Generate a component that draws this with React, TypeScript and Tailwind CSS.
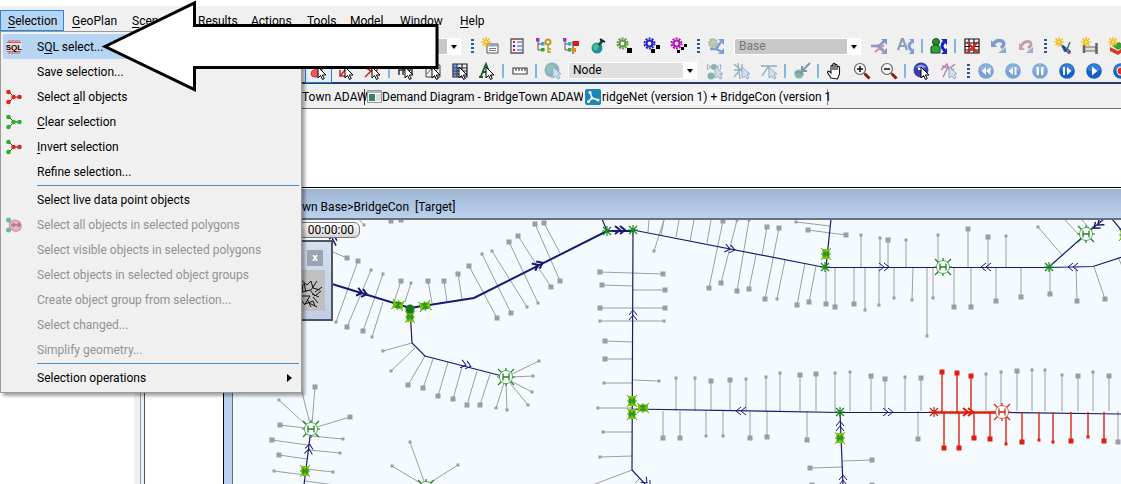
import React from "react";

type Stub = [number, number, number, number, number, number];

const up = (y: number, list: [number, number, number][]): Stub[] =>
  list.map(([x, top, s]) => [x, top, s, x, y, 0]);

const greyStubs: Stub[] = [
  [347, 258, 2, 333, 252, 0], [358, 261, 2, 336, 322, 1], [371, 270, 1, 347, 327, 2], [383, 274, 1, 363, 331, 2],
  [401, 281, 2, 394, 302, 0], [372, 337, 1, 383, 302, 0], [411, 283, 1, 405, 302, 0], [428, 281, 2, 432, 303, 0],
  [444, 281, 2, 447, 302, 0], [458, 274, 2, 462, 299, 0], [469, 266, 2, 497, 318, 2], [482, 254, 1, 511, 313, 2],
  [492, 251, 1, 527, 307, 1], [509, 242, 2, 538, 303, 1], [518, 236, 2, 551, 287, 2], [535, 224, 2, 560, 281, 2],
  [544, 223, 2, 560, 253, 0], [600, 272, 2, 663, 274, 2], [602, 285, 2, 633, 286, 0], [665, 290, 2, 633, 290, 0],
  [600, 308, 2, 665, 308, 2], [600, 321, 1, 664, 321, 1], [605, 341, 2, 633, 342, 0], [605, 359, 2, 633, 359, 0],
  [604, 383, 1, 633, 383, 0], [659, 381, 1, 633, 380, 0], [598, 408, 1, 632, 408, 0], [603, 432, 1, 632, 432, 0],
  [600, 457, 1, 632, 456, 0], [595, 484, 0, 632, 470, 0], [635, 483, 0, 640, 478, 0],
  [364, 225, 1, 358, 218, 0], [391, 221, 2, 391, 219, 0], [401, 220, 2, 401, 219, 0],
  [649, 220, 0, 648, 232, 0], [654, 251, 1, 664, 220, 0], [664, 220, 0, 661, 235, 0], [679, 220, 0, 676, 237, 0],
  [694, 220, 0, 690, 241, 0], [711, 220, 0, 707, 243, 0], [723, 221, 2, 709, 288, 2], [737, 220, 1, 721, 283, 2],
  [749, 220, 1, 737, 291, 2], [767, 227, 2, 762, 255, 0], [749, 289, 2, 756, 255, 0], [779, 228, 2, 765, 299, 2],
  [777, 299, 1, 785, 260, 0], [797, 305, 2, 805, 263, 0], [809, 302, 2, 816, 266, 0], [796, 222, 1, 830, 226, 0],
  [808, 230, 2, 846, 235, 2], [912, 300, 1, 913, 267, 0], [1077, 301, 2, 1076, 267, 0], [1105, 299, 2, 1094, 267, 0],
  [1038, 227, 1, 1063, 256, 0], [1065, 220, 0, 1081, 237, 0], [1082, 220, 0, 1090, 229, 0], [1118, 257, 0, 1122, 266, 0],
  [383, 351, 1, 412, 343, 0], [391, 371, 1, 415, 348, 0], [408, 385, 2, 425, 356, 0], [423, 388, 2, 433, 359, 0],
  [438, 396, 2, 448, 362, 0], [453, 399, 2, 462, 367, 0], [467, 405, 2, 477, 371, 0], [480, 405, 2, 490, 374, 0],
  [539, 361, 1, 512, 374, 0], [533, 376, 1, 512, 377, 0], [532, 392, 1, 511, 381, 0], [496, 408, 1, 504, 383, 0],
  [507, 410, 1, 506, 383, 0], [528, 405, 1, 510, 383, 0],
  [315, 387, 2, 312, 424, 0], [301, 388, 0, 310, 424, 0], [279, 400, 1, 305, 424, 0], [280, 425, 2, 305, 428, 0],
  [350, 417, 2, 317, 427, 0], [272, 440, 2, 308, 445, 0], [343, 439, 1, 311, 436, 0], [340, 453, 1, 309, 450, 0],
  [279, 455, 2, 307, 459, 0], [274, 471, 1, 305, 475, 0], [333, 472, 1, 306, 469, 0], [335, 485, 0, 305, 481, 0],
  [410, 442, 1, 425, 484, 0], [392, 466, 1, 422, 484, 0], [458, 465, 1, 428, 484, 0],
  [810, 468, 2, 842, 467, 0], [872, 460, 2, 843, 461, 0], [812, 485, 2, 812, 485, 0], [872, 485, 2, 872, 485, 0],
  ...up(267, [
    [826, 304, 2], [835, 307, 2], [854, 304, 2], [865, 310, 1], [879, 305, 1], [894, 298, 1], [861, 235, 1],
    [880, 238, 1], [888, 240, 2], [906, 240, 1], [938, 235, 1], [968, 229, 2], [988, 237, 2], [1006, 236, 1],
    [927, 336, 1], [933, 298, 1], [954, 307, 2], [971, 307, 2], [996, 301, 2], [1021, 297, 2], [1050, 294, 2],
  ]),
  ...up(411, [
    [676, 378, 1], [695, 378, 1], [711, 381, 2], [730, 380, 2], [746, 379, 1], [766, 377, 1], [780, 373, 1],
    [800, 375, 2], [816, 374, 2], [835, 373, 1], [850, 372, 1], [871, 376, 2], [885, 379, 2], [905, 377, 1],
    [921, 378, 2], [986, 374, 1], [1001, 372, 1], [1017, 371, 2], [1032, 370, 1], [1045, 370, 1], [1062, 375, 1],
    [1078, 376, 2], [1093, 372, 1], [1109, 376, 2], [663, 438, 2], [680, 438, 2], [706, 436, 1], [723, 436, 1],
    [750, 438, 2], [767, 437, 2], [807, 440, 2], [918, 439, 2], [1118, 442, 2],
  ]),
];

const redStubs: Stub[] = up(412, [
  [942, 372, 2], [957, 373, 2], [971, 376, 2], [944, 448, 2], [959, 448, 2], [974, 438, 2], [990, 439, 2],
  [1006, 444, 1], [1022, 442, 2], [1039, 440, 1], [1053, 442, 1], [1071, 441, 2], [1088, 437, 1], [1104, 441, 2],
]);

function Stubs({ items, color, width }: { items: Stub[]; color: string; width: number }) {
  const size = [0, 3, 5];
  const square = (x: number, y: number, s: number) =>
    s > 0 && <rect x={x - size[s] / 2} y={y - size[s] / 2} width={size[s]} height={size[s]} fill={color} />;
  return (
    <g>
      {items.map(([x1, y1, s1, x2, y2, s2], i) => (
        <g key={i}>
          <line x1={x1} y1={y1} x2={x2} y2={y2} stroke={color} strokeWidth={width} />
          {square(x1, y1, s1)}
          {square(x2, y2, s2)}
        </g>
      ))}
    </g>
  );
}

function Chevrons({ x, y, a, w = 1, c = "#191970" }: { x: number; y: number; a: number; w?: number; c?: string }) {
  return (
    <path transform={`translate(${x} ${y}) rotate(${a})`} d="M-5-4 0 0-5 4M0-4 5 0 0 4" fill="none" stroke={c} strokeWidth={w} />
  );
}

function Star({ x, y, c = "#1a8a1a" }: { x: number; y: number; c?: string }) {
  return <path transform={`translate(${x} ${y})`} d="M-5 0H5M0-5V5M-4-4 4 4M-4 4 4-4" stroke={c} strokeWidth="1.2" />;
}

function Hydrant({ x, y, c = "#1f7f1f" }: { x: number; y: number; c?: string }) {
  return (
    <g transform={`translate(${x} ${y})`} stroke={c} fill="none">
      <path d="M0-9V9M-9 0H9M-8-8 8 8M-8 8 8-8" strokeWidth="1.2" />
      <circle r="6.500" fill="#fbfffb" strokeWidth="1" strokeOpacity=".7" />
      <path d="M-3-3.500V3.500M3-3.500V3.500M-3 0H3" strokeWidth="1.300" />
    </g>
  );
}

function Valve({ x, y, a = 0 }: { x: number; y: number; a?: number }) {
  return (
    <g transform={`translate(${x} ${y}) rotate(${a})`}>
      <path d="M-5-6 5 6M5-6-5 6M-5 0H5" stroke="#4aa51a" strokeWidth="1" />
      <path d="M-4-5H4L3 0 4 5H-4L-3 0Z" fill="#7cc207" />
      <circle r="3.500" fill="#2f971b" />
      <path d="M-3-5 0-1 3-5ZM-3 5 0 1 3 5Z" fill="#7cc207" />
    </g>
  );
}

function NetworkMap() {
  return (
    <svg className="block h-full w-full bg-[#f5faff]" role="img" aria-label="Network map">
      <g transform="translate(-233 -220)">
        <Stubs items={greyStubs} color="#9a9ea2" width={1} />
        <g fill="none" stroke="#191970" strokeWidth="1.2">
          <path d="M602 219 607 231M633 230 825 267.500H1049L1093 266.500 1122 257M633 230 632 470 646 485M632 409 840 412.500H935M1002 412.500 1122 414M840 412 843 485M831 219 826 267M1049 267 1086 234 1104 219M1112 219 1122 231M410 308 412 343 425 356 506 377M311 429 304 485M331 250 333 236" />
          <path d="M332 284 410 308 474 298 607 231H633" strokeWidth="2" />
        </g>
        <Stubs items={redStubs} color="#e0200f" width={1.4} />
        <path d="M935 412.500H1002" stroke="#e0200f" strokeWidth="2.500" />
        <Chevrons x={362} y={293} a={16} w={2} />
        <Chevrons x={538} y={265} a={-26} w={2} />
        <Chevrons x={620} y={230} a={0} w={2} />
        <Chevrons x={730} y={249} a={11} />
        <Chevrons x={884} y={267} a={0} />
        <Chevrons x={986} y={267} a={180} />
        <Chevrons x={1073} y={267} a={180} />
        <Chevrons x={1098} y={225} a={140} w={1.5} />
        <Chevrons x={466} y={365} a={14} />
        <Chevrons x={633} y={315} a={-90} />
        <Chevrons x={741} y={411} a={180} />
        <Chevrons x={840} y={426} a={-90} />
        <Chevrons x={843} y={480} a={-90} />
        <Chevrons x={888} y={412} a={0} />
        <Chevrons x={647} y={483} a={45} />
        <Chevrons x={309} y={449} a={-83} />
        <Chevrons x={333} y={240} a={-80} w={1.5} />
        <Chevrons x={968} y={412} a={0} w={2} c="#e0200f" />
        <Star x={607} y={231} />
        <Star x={633} y={230} />
        <Star x={825} y={267} />
        <Star x={1049} y={267} />
        <Star x={840} y={412} />
        <Star x={934} y={412} c="#c8281a" />
        <Hydrant x={943} y={267} />
        <Hydrant x={1086} y={234} />
        <Hydrant x={506} y={377} />
        <Hydrant x={311} y={429} />
        <Hydrant x={426} y={488} />
        <Hydrant x={1002} y={412} c="#c8281a" />
        <Valve x={398} y={305} a={100} />
        <Valve x={425} y={306} a={80} />
        <Valve x={410} y={317} />
        <circle cx="410" cy="309" r="4.500" fill="#15771a" />
        <Valve x={632} y={401} />
        <Valve x={632} y={414} />
        <Valve x={643} y={408} a={90} />
        <Valve x={840} y={438} />
        <Valve x={826} y={254} />
        <Valve x={305} y={471} />
        <Valve x={1124} y={235} />
      </g>
    </svg>
  );
}

/* Toolbar drawings, each on an 18 x 18 grid */

const pointer = <path d="M8 5v11l2.500-2.500 2 4 1.800-1-2-3.500H16z" fill="#fff" stroke="#000" strokeWidth="1" />;
const palePointer = <path d="M9 5v11l3-2 2 3 2-1-2-4h3z" fill="#bcd4e8" stroke="#4678b4" />;
const sun = (
  <g stroke="#f2b50c" strokeWidth="1.200">
    <path d="M5 0v10M0 5h10M1.500 1.500l7 7M8.500 1.500l-7 7" />
    <circle cx="5" cy="5" r="2" fill="#ffe45c" />
  </g>
);
const gear = (c: string, squares: React.ReactNode) => (
  <>
    <circle cx="6.500" cy="6.500" r="5" fill="none" stroke={c} strokeWidth="2" strokeDasharray="2 1.140" />
    <circle cx="6.500" cy="6.500" r="3" fill="none" stroke={c} strokeWidth="2.200" />
    <g fill="#000">{squares}</g>
  </>
);
const mediaDisc = (glyph: string) => (
  <>
    <circle cx="9" cy="9" r="7.800" fill="#1560c4" />
    <path d="M2.500 8a6.500 6 0 0 1 13 0q-6.500 3-13 0" fill="#4c93e4" opacity=".6" />
    <path d={glyph} fill="#fff" />
  </>
);
const tree = (
  <>
    <path d="M3 3v10h4M3 7h5" fill="none" stroke="#555" />
    <path d="M1 1h3.500v3.500H1z" fill="#a030c0" />
    <path d="M6 5h3.500v3.500H6z" fill="#2bb0c8" />
    <path d="M6 11h3.500v3.500H6z" fill="#35a535" />
  </>
);
const magnifier = (plus: boolean) => (
  <>
    <path d="M10 10l3 3" stroke="#555" strokeWidth="2" />
    <path d="M12 12l4.500 4.500" stroke="#8e1b12" strokeWidth="3" />
    <circle cx="7" cy="7" r="5.500" fill="#f4f4f4" stroke="#666" strokeWidth="1.200" />
    <path d={plus ? "M4 7h6M7 4v6" : "M4 7h6"} stroke="#111" strokeWidth="1.500" />
  </>
);

const drawings = {
  newTable: <><path d="M6 7h11v9H6z" fill="#fff" stroke="#555" /><path d="M6.500 7.500h10v2h-10z" fill="#7fa3d8" /><path d="M8 11.500h7M8 13.500h7" stroke="#777" />{sun}</>,
  checklist: <><path d="M3 2h12v14H3z" fill="#f3f3ff" stroke="#555" strokeWidth="1.300" /><path d="M9 5h5M9 9h5M9 13h5" stroke="#7a8bc0" strokeWidth="1.500" /><path d="M5 4h2v2H5zM5 12h2v2H5z" fill="#d22" /><path d="M5 8h2v2H5z" fill="#22a" /></>,
  treeKey: <>{tree}<circle cx="13" cy="5" r="2.500" fill="none" stroke="#c09a28" strokeWidth="2" /><path d="M13 7v9M13 12h3M13 15h3" stroke="#c09a28" strokeWidth="1.500" /></>,
  treeFlag: <>{tree}<path d="M11 4v13" stroke="#333" /><path d="M11 4h6v5h-6z" fill="#d81b1b" /><path d="M10 11h4v4h-4z" fill="#e0862c" /></>,
  globePin: <><circle cx="8" cy="11" r="5.500" fill="#1e8fa0" /><path d="M4 9q4-4 6 0l-3 5q-3-1-3-5" fill="#4cc07c" /><path d="M9 8l3-6 3 2-4 5z" fill="#1d4c3c" /><path d="M11 2l5 3" stroke="#123" strokeWidth="2" /></>,
  gearGreen: gear("#5d9c3c", <rect x="11" y="11" width="5" height="5" />),
  gearBlue: gear("#2424c8", <><rect x="8" y="12" width="4" height="4" /><rect x="13" y="8" width="4" height="4" /></>),
  gearPurple: gear("#b318b3", <><rect x="7" y="13" width="3" height="3" /><rect x="11" y="10" width="3" height="3" /><rect x="14" y="7" width="3" height="3" /></>),
  gearBranch: <><circle cx="6" cy="6" r="4" fill="#88ac70" stroke="#6c945c" strokeWidth="2" strokeDasharray="2 1" /><path d="M3 12h6l5-7M9 12l6 3" fill="none" stroke="#2d53c4" strokeWidth="2.500" /><path d="M11 2h6v6zM17 11v6h-6z" fill="#2d53c4" /></>,
  branchCut: <><path d="M1 9h6q3 0 7-5M8 9l6 5" fill="none" stroke="#2d4fb0" strokeWidth="2.500" /><path d="M11 2h6v6zM17 11v6h-6z" fill="#2d4fb0" /><path d="M5 15l9-7M6 8l9 8" stroke="#94407e" strokeWidth="2" /></>,
  branchText: <><path d="M1 13 5 2h1l4 11M3 9h5" fill="none" stroke="#3a5f7f" strokeWidth="2.200" /><path d="M15 5q-6 3 0 9" fill="none" stroke="#2d53c4" strokeWidth="3" /><path d="M12 2h5v5zM17 11v6h-5z" fill="#2d53c4" /></>,
  userBranch: <><circle cx="6" cy="5" r="3.500" fill="#1f8f2a" stroke="#0b4f12" /><path d="M1 16v-6q5-4 9 0v6z" fill="#2ea53a" stroke="#0b4f12" /><path d="M15 4q-6 5 0 10" fill="none" stroke="#1326c4" strokeWidth="3" /><path d="M11 2h6v6zM17 11v6h-6z" fill="#1326c4" /></>,
  gridDelete: <><path d="M2 2h14v14H2zM2 6h14M2 9.500h14M2 13h14M6 2v14M11 2v14" fill="#fff" stroke="#111" strokeWidth="1.200" /><path d="M4 5l11 11M15 5 4 16" stroke="#dc2418" strokeWidth="2.200" /></>,
  undoBlue: <><path d="M3 7q4-5 9-3 4 3-1 7" fill="none" stroke="#2256b0" strokeWidth="3.500" /><path d="M1 3v7h6z" fill="#2256b0" /><path d="M8 16h8v-6z" fill="#2f87a0" /></>,
  undoRed: <><path d="M4 9q4-6 9-4 3 3-2 6" fill="none" stroke="#a05a70" strokeWidth="3" /><path d="M2 6v7h6z" fill="#b06074" /><path d="M9 16h7v-6z" fill="#6a74b4" /></>,
  sunBranch: <><path d="M7 7l4 8M12 15l4-10M8 8l8 6" fill="none" stroke="#376" strokeWidth="1.500" /><path d="M9 9l3 5" stroke="#23b" strokeWidth="2" /><circle cx="15" cy="15" r="2" fill="#824a9a" />{sun}</>,
  sunPipe: <><path d="M3 10h12v4H3z" fill="#ddd" stroke="#666" /><path d="M3 8v8M15.500 6v11" stroke="#666" strokeWidth="2.500" fill="none" />{sun}</>,
  sunPlane: <><path d="M2 10l8 4 7-5v4l-7 5-8-4z" fill="#d33b20" /><path d="M4 9l7-4 6 4-7 4z" fill="#35a02e" />{sun}</>,
  selectPolygon: <><path d="M9 1q5-1 3 6 1 8-6 8t-4-6q4-1 3-5z" fill="#f45a5a" stroke="#e02020" />{pointer}</>,
  selectDown: <><path d="M14 1 3 14M3 8v6h6M2 2l5 4" fill="none" stroke="#d02020" strokeWidth="1.500" />{pointer}</>,
  selectUp: <><path d="M1 15 12 4M7 3h6v6M2 6l9 5" fill="none" stroke="#d02020" strokeWidth="1.500" />{pointer}</>,
  selectPipe: <><path d="M2 4v9M6 4v9M2 8h12M15 4v9" fill="none" stroke="#333" strokeWidth="1.500" />{pointer}</>,
  selectChart: <><path d="M2 3h14v12H2z" fill="#eee" stroke="#444" /><path d="M3 12l4-5 4 4 4-6" stroke="#448844" fill="none" />{pointer}</>,
  selectGrid: <><path d="M2 2h14v13H2zM2 6h14M2 9h14M2 12h14M6 2v13M11 2v13" fill="#e6efff" stroke="#222" strokeWidth="1.200" /><path d="M2 2h4v13H2z" fill="#2d5cb0" opacity=".6" />{pointer}</>,
  selectText: <><path d="M1 15h4M2.500 15 8 2l5 13M4 10h6" fill="none" stroke="#14602b" strokeWidth="1.800" />{pointer}</>,
  ruler: <path d="M2 6h14v6H2zM5 6v3M8 6v3M11 6v3M14 6v3" fill="#fff" stroke="#444" strokeWidth="1.200" />,
  globe: <><circle cx="8" cy="8" r="7.500" fill="#3f7fa4" /><path d="M3 4q5-3 7 1l-4 7Q2 9 3 4M10 8h4l-2 5z" fill="#45a07c" />{palePointer}</>,
  traceNode: <><circle cx="5" cy="14" r="3.500" fill="#2e8a6c" /><circle cx="8" cy="5" r="3" fill="#2e8a6c" /><path d="M2 2q-2 3 0 6M14 2q2 3 0 6M4 3v4M12 3v4" fill="none" stroke="#567" />{palePointer}</>,
  traceMesh: <><path d="M1 2l14 12M1 8h9M5 1l2 16M1 15l8-9M9 2v6" fill="none" stroke="#3f8080" strokeWidth="1.300" />{palePointer}</>,
  traceLine: <><path d="M1 4h16M2 14 8 5l4 7" fill="none" stroke="#456a90" strokeWidth="1.300" />{palePointer}</>,
  connect: <><circle cx="6" cy="12" r="4.500" fill="#2e8a6c" /><path d="M17 1 9 9M9 4v5h5M2 11q4-3 8 2" fill="none" stroke="#25506c" strokeWidth="2" /></>,
  hand: <path d="M5 16 1.500 10.500q0-2 2-1L5 11V4q1-1.500 2 0v4-6q1-1.500 2 0v6-5q1-1.500 2 0v5-3q1.500-1.500 2.500 0v7l-2 5z" fill="#fff" stroke="#111" strokeWidth="1.100" />,
  zoomIn: magnifier(true),
  zoomOut: magnifier(false),
  info: <><circle cx="8" cy="8" r="7.500" fill="#3541a8" /><path d="M3 5q5-5 10 0-5 3-10 0" fill="#8e99e0" /><path d="M5 7h4v6" stroke="#fff" strokeWidth="2" fill="none" />{pointer}</>,
  profile: <><path d="M1 8l6-6 2 5 6-5M3 15 8 5M2 4l12 4" fill="none" stroke="#8a2a8a" strokeWidth="1.500" />{palePointer}</>,
  rewind: mediaDisc("M9 5v8L4.500 9zM13.500 5v8L9 9z"),
  stepBack: mediaDisc("M9 5v8L4.500 9zM10.500 5h2v8h-2z"),
  pause: mediaDisc("M5.500 5h2.500v8H5.500zM10 5h2.500v8H10z"),
  stepForward: mediaDisc("M5 5h2v8H5zM9 5v8l4.500-4z"),
  play: mediaDisc("M7 4.500v9L12.500 9z"),
  record: <>{mediaDisc("M0 0")}<circle cx="9" cy="9" r="4.500" fill="#fff" /><circle cx="9" cy="9" r="3.500" fill="#e03020" /></>,
};

type Name = keyof typeof drawings;

function Tool({ name, disabled, active }: { name: Name; disabled?: boolean; active?: boolean }) {
  return (
    <button
      type="button"
      aria-label={name}
      disabled={disabled}
      className={
        "flex h-6 w-[27px] shrink-0 items-center justify-center border disabled:opacity-55 " +
        (active ? "border-[#2a7fd0] bg-[#e3effa]" : "border-transparent")
      }
    >
      <svg width="18" height="18" viewBox="0 0 18 18">{drawings[name]}</svg>
    </button>
  );
}

const Separator = () => <span className="mx-[2px] h-[14px] w-[2px] shrink-0 bg-[#82b4e2]" />;
const Grip = () => <span className="mr-[2px] ml-[5px] h-[14px] w-[3px] shrink-0 bg-[repeating-linear-gradient(to_bottom,#2c5b93_0_2px,transparent_2px_4px)]" />;

function Combo({ label, value, disabled, className }: { label: string; value: string; disabled?: boolean; className: string }) {
  return (
    <div className={"relative shrink-0 " + className}>
      <select
        aria-label={label}
        disabled={disabled}
        className={
          "block h-[17px] w-full appearance-none border-y border-r-[14px] border-l border-white pl-1 text-[12px] leading-[15px] opacity-100 " +
          (disabled ? "bg-[#c8c8c8] text-[#777]" : "bg-[#e0e0e0] text-black")
        }
      >
        <option>{value}</option>
      </select>
      <svg className="pointer-events-none absolute top-[7px] right-1" width="6" height="4" viewBox="0 0 6 4"><path d="M0 0h6L3 4z" /></svg>
    </div>
  );
}

function NodesIcon({ left, right }: { left: string; right: string }) {
  return (
    <svg width="16" height="16" viewBox="0 0 16 16">
      <path d="M3 3l5 5-5 5M8 8h6" fill="none" stroke="#333" />
      <circle cx="2.500" cy="3" r="2.300" fill={left} />
      <circle cx="2.500" cy="13" r="2.300" fill={left} />
      <circle cx="7.500" cy="8" r="2.300" fill={right} />
      <circle cx="13.500" cy="8" r="2.300" fill={right} />
    </svg>
  );
}

const sqlIcon = (
  <svg width="16" height="14" viewBox="0 0 16 14">
    <path d="M2 1h12M1 2.500h14M1 11.500h14M2 13h12" stroke="#d65a5a" strokeWidth="1" />
    <path d="M0 3h16v8H0z" fill="#eadede" />
    <text x="8" y="10" textAnchor="middle" fontSize="8" fontWeight="bold" fontFamily="Liberation Sans, sans-serif">SQL</text>
  </svg>
);

const polygonIcon = (
  <svg width="16" height="16" viewBox="0 0 16 16" className="opacity-70">
    <path d="M3 3l4 5-4 5" fill="none" stroke="#666" />
    <circle cx="2.500" cy="3" r="2.500" fill="#37a37c" />
    <circle cx="2.500" cy="13" r="2.500" fill="#37a37c" />
    <path d="M4 5q5-4 10 0 3 4 0 8-6 3-9-1-3-3-1-7" fill="#e59aa8" stroke="#b3647c" />
    <path d="M6 8h8M8 6l-2 2 2 2M12 6l2 2-2 2" fill="none" stroke="#8d4870" strokeWidth="1.500" />
  </svg>
);

interface Entry {
  text: React.ReactNode;
  icon?: React.ReactNode;
  disabled?: boolean;
  selected?: boolean;
  submenu?: boolean;
}

const U = ({ children }: { children: string }) => <span className="underline underline-offset-2">{children}</span>;

const groups: Entry[][] = [
  [
    { text: <>S<U>Q</U>L select...</>, icon: sqlIcon, selected: true },
    { text: "Save selection..." },
    { text: <>Select <U>a</U>ll objects</>, icon: <NodesIcon left="#e2231a" right="#e2231a" /> },
    { text: <><U>C</U>lear selection</>, icon: <NodesIcon left="#2bac2b" right="#2bac2b" /> },
    { text: <><U>I</U>nvert selection</>, icon: <NodesIcon left="#2bac2b" right="#e2231a" /> },
    { text: "Refine selection..." },
  ],
  [
    { text: "Select live data point objects" },
    { text: "Select all objects in selected polygons", icon: polygonIcon, disabled: true },
    { text: "Select visible objects in selected polygons", disabled: true },
    { text: "Select objects in selected object groups", disabled: true },
    { text: "Create object group from selection...", disabled: true },
    { text: "Select changed...", disabled: true },
    { text: "Simplify geometry...", disabled: true },
  ],
  [{ text: "Selection operations", submenu: true }],
];

function SelectionMenu() {
  return (
    <div role="menu" aria-label="Selection" className="absolute top-[31px] left-0 z-10 w-[302px] border border-[#9a9a9a] bg-[#f0f0f0] px-[2px] py-[2px] shadow-[3px_3px_3px_rgba(0,0,0,0.35)]">
      {groups.map((group, g) => (
        <React.Fragment key={g}>
          {g > 0 && <div role="separator" className="my-px ml-[34px] h-px bg-[#4a90c8]" />}
          {group.map((entry, i) => (
            <button
              key={i}
              type="button"
              role="menuitem"
              disabled={entry.disabled}
              className={
                "flex h-[25px] w-full items-center text-left disabled:text-[#929292] " + (entry.selected ? "bg-[#b5d5f2]" : "")
              }
            >
              <span className="w-[34px] shrink-0 pl-[3px]">{entry.icon}</span>
              <span className="flex-1 whitespace-nowrap">{entry.text}</span>
              {entry.submenu && <svg className="mr-[7px]" width="5" height="8" viewBox="0 0 5 8"><path d="M0 0l5 4-5 4z" /></svg>}
            </button>
          ))}
        </React.Fragment>
      ))}
    </div>
  );
}

const menus: [string, string][] = [
  ["GeoPlan", "w-[60px]"], ["Scenarios", "w-[66px]"], ["Results", "w-[53px]"], ["Actions", "w-[56px]"],
  ["Tools", "w-[43px]"], ["Model", "w-[50px]"], ["Window", "w-[60px]"], ["Help", "w-[44px]"],
];

export default function App() {
  return (
    <div className="relative flex h-screen flex-col overflow-hidden bg-white pt-[6px] font-[Roboto,'Open_Sans',sans-serif] text-[12px] leading-4 text-black">
      <nav className="flex h-[27px] shrink-0 bg-[#f0f0f0] pt-1">
        <button type="button" className="h-[21px] w-16 shrink-0 border border-[#2a86d8] bg-[#b5d5f2] pl-[7px] text-left"><U>S</U>election</button>
        {menus.map(([name, width]) => (
          <button key={name} type="button" className={"h-[21px] shrink-0 pl-2 text-left " + width}><U>{name[0]}</U>{name.slice(1)}</button>
        ))}
      </nav>
      <div className="flex h-[26px] shrink-0 items-center bg-[#f0f0f0] pl-[302px]">
        <Combo label="Scenario" value="" disabled className="w-[159px]" />
        <span className="w-[5px] shrink-0" />
        <Grip />
        <Tool name="newTable" /><Tool name="checklist" /><Tool name="treeKey" /><Tool name="treeFlag" />
        <Tool name="globePin" /><Tool name="gearGreen" /><Tool name="gearBlue" /><Tool name="gearPurple" />
        <Grip />
        <Tool name="gearBranch" disabled />
        <Combo label="Base scenario" value="Base" disabled className="mr-1 ml-[5px] w-[127px]" />
        <Tool name="branchCut" disabled /><Tool name="branchText" disabled />
        <Separator />
        <Tool name="userBranch" />
        <Separator />
        <Tool name="gridDelete" /><Tool name="undoBlue" disabled /><Tool name="undoRed" disabled />
        <Grip />
        <Tool name="sunBranch" /><Tool name="sunPipe" /><Tool name="sunPlane" />
      </div>
      <div className="flex h-[25px] shrink-0 items-center border-b-2 border-[#1f3f66] bg-[#f0f0f0] pl-[305px]">
        <Tool name="selectPolygon" active /><Tool name="selectDown" /><Tool name="selectUp" />
        <Separator />
        <Tool name="selectPipe" /><Tool name="selectChart" /><Tool name="selectGrid" /><Tool name="selectText" />
        <Separator />
        <Tool name="ruler" />
        <Separator />
        <Tool name="globe" disabled />
        <Combo label="Object type" value="Node" className="mr-1 ml-[2px] w-[129px]" />
        <Tool name="traceNode" disabled /><Tool name="traceMesh" disabled /><Tool name="traceLine" disabled />
        <Separator />
        <Tool name="connect" disabled />
        <Separator />
        <Tool name="hand" /><Tool name="zoomIn" /><Tool name="zoomOut" />
        <Separator />
        <Tool name="info" /><Tool name="profile" disabled />
        <Grip />
        <Tool name="rewind" disabled /><Tool name="stepBack" disabled /><Tool name="pause" disabled />
        <Tool name="stepForward" /><Tool name="play" /><Tool name="record" />
      </div>
      <div role="tablist" className="flex h-[25px] shrink-0 items-center border-b border-[#6a6a6a] bg-[#f0f0f0] pt-px pl-[302px] whitespace-nowrap">
        <button type="button" role="tab" className="h-4 w-[63px] shrink-0 border-r border-[#333] text-left">Town ADAW</button>
        <button type="button" role="tab" className="flex h-4 w-[218px] shrink-0 items-center text-left">
          <svg className="ml-[2px] shrink-0" width="15" height="13" viewBox="0 0 15 13">
            <path d="M.5.500h14v12H.5z" fill="#fff" stroke="#8a9aa8" />
            <path d="M1 1h13v2H1z" fill="#a8b8c8" />
            <path d="M2 4h6v7H2z" fill="#3f8068" />
            <path d="M9 4h5v7H9z" fill="#d4dfe6" />
          </svg>
          Demand Diagram - BridgeTown ADAW
        </button>
        <button type="button" role="tab" aria-selected="true" className="flex h-4 w-[245px] shrink-0 items-center border-r border-[#888] bg-[#f6f6f6] text-left">
          <svg className="mr-px ml-[2px] shrink-0" width="16" height="16" viewBox="0 0 16 16">
            <rect width="16" height="16" rx="2" fill="#1a87b8" />
            <path d="M5 3l2 6-4 4M7 9l6 2" fill="none" stroke="#fff" strokeWidth="1.500" />
            <circle cx="5" cy="3.500" r="1.500" fill="#fff" /><circle cx="3.500" cy="12.500" r="1.500" fill="#fff" /><circle cx="13" cy="11" r="1.500" fill="#fff" /><circle cx="7" cy="9" r="1.500" fill="#fff" />
          </svg>
          ridgeNet (version 1) + BridgeCon (version 1
        </button>
      </div>
      <main className="flex min-h-0 flex-1">
        <aside className="w-[134px] shrink-0 bg-white" />
        <div className="flex w-[11px] shrink-0 border-r border-[#555] bg-[#f0f0f0] pl-[6px]">
          <span className="w-px bg-[#6fa8dc]" />
        </div>
        <div className="flex min-w-0 flex-1 pt-[78px] pl-[78px]">
          <section className="flex min-w-0 flex-1 flex-col border-t border-l border-black bg-[#b9d1ee] pl-2">
            <h1 className="-ml-2 h-[32px] shrink-0 border-t border-b-2 border-t-white border-b-[#6c7078] bg-linear-to-b from-[#9fb5d2] to-[#bad2ee] pt-[10px] pl-[78px] whitespace-pre">wn Base&gt;BridgeCon  [Target]</h1>
            <div className="relative min-h-0 flex-1 border-l border-[#6c7078]">
              <NetworkMap />
              <div className="absolute top-[2px] left-0 flex h-[16px] w-[127px] items-center justify-end rounded-r-md border border-[#777] bg-linear-to-b from-white to-[#d8d4d4] pr-[5px]">00:00:00</div>
              <div className="absolute top-[20px] left-0 flex h-[81px] w-[100px] flex-col items-end border-2 border-[#50545c] bg-linear-to-b from-[#d4e0f0] to-[#c0cee6] pt-2 pr-[6px]">
                <button type="button" aria-label="Close" className="mr-[2px] h-4 w-4 bg-[#9aa4b2] text-center text-[11px] leading-[14px] font-bold text-white">x</button>
                <svg className="mt-[4px] bg-[#c0c0c0]" width="80" height="41" viewBox="0 0 80 41">
                  <path d="M55 9l7 6 4-4 2 7 7 2M58 14l-1 8 8-2 5 6 6-5M57 26h8l-5 8 8-3 2 5M61 22l-2-9M66 20l6-9M68 27l5 6M62 29l4 8M57 31l3 4M70 22l7-5M64 33l8 4M74 27l-7-3" fill="none" stroke="#111" strokeWidth="1" />
                </svg>
              </div>
            </div>
          </section>
        </div>
      </main>
      <SelectionMenu />
      <svg className="pointer-events-none absolute top-0 left-[98px] z-20" width="344" height="94" viewBox="98 0 344 94" aria-hidden="true">
        <path d="M105 46.500 194.500 3V25.500H437V67.500H194.500V89.500Z" fill="#fff" stroke="#000" strokeWidth="3" />
      </svg>
    </div>
  );
}
